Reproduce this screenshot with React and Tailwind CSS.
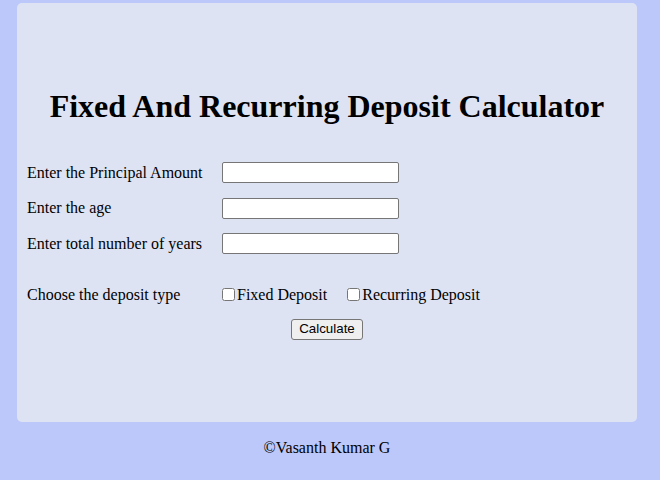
import { useState } from 'react'

const fields = [
  { key: 'principal', label: 'Enter the Principal Amount' },
  { key: 'age', label: 'Enter the age' },
  { key: 'years', label: 'Enter total number of years' },
]

export default function App() {
  const [values, setValues] = useState({ principal: '', age: '', years: '' })
  const [types, setTypes] = useState({ fixed: false, recurring: false })

  return (
    <div className="min-h-screen w-full bg-[#bcc8fa] pt-[3px] font-['Liberation_Serif','Times_New_Roman',serif] text-black">
      <div className="ml-[17px] w-[620px] h-[419px] rounded-[5px] bg-[#dee3f4] pl-[10px]">
        <h1 className="pt-[85px] h-[122px] text-center text-[32px] leading-[37px] font-bold pr-[10px]">
          Fixed And Recurring Deposit Calculator
        </h1>

        <div className="mt-[30px] text-[16px]">
          {fields.map(({ key, label }) => (
            <div key={key} className="flex items-center h-[35.5px]">
              <label className="w-[195px]">{label}</label>
              <input
                type="text"
                value={values[key]}
                onChange={(e) => setValues({ ...values, [key]: e.target.value })}
                className="w-[177px] h-[21px] bg-white border border-[#767676] rounded-[2px] px-[2px] text-[13px] outline-none"
              />
            </div>
          ))}

          <div className="flex items-center h-[34px] mt-[16px]">
            <span className="w-[195px]">Choose the deposit type</span>
            <label className="flex items-center">
              <input
                type="checkbox"
                checked={types.fixed}
                onChange={(e) => setTypes({ ...types, fixed: e.target.checked })}
                className="w-[13px] h-[13px] m-0 mr-[2px]"
              />
              <span>Fixed Deposit</span>
            </label>
            <label className="flex items-center ml-[20px]">
              <input
                type="checkbox"
                checked={types.recurring}
                onChange={(e) => setTypes({ ...types, recurring: e.target.checked })}
                className="w-[13px] h-[13px] m-0 mr-[2px]"
              />
              <span>Recurring Deposit</span>
            </label>
          </div>

          <div className="flex justify-center pr-[10px] mt-[7px]">
            <button className="w-[72px] h-[21px] bg-[#efefef] border border-[#767676] rounded-[3px] text-[13.33px] leading-none font-['Liberation_Sans',Arial,sans-serif]">
              Calculate
            </button>
          </div>
        </div>
      </div>

      <p className="ml-[17px] w-[620px] mt-[17px] text-center text-[16px] leading-[18px]">
        ©Vasanth Kumar G
      </p>
    </div>
  )
}
